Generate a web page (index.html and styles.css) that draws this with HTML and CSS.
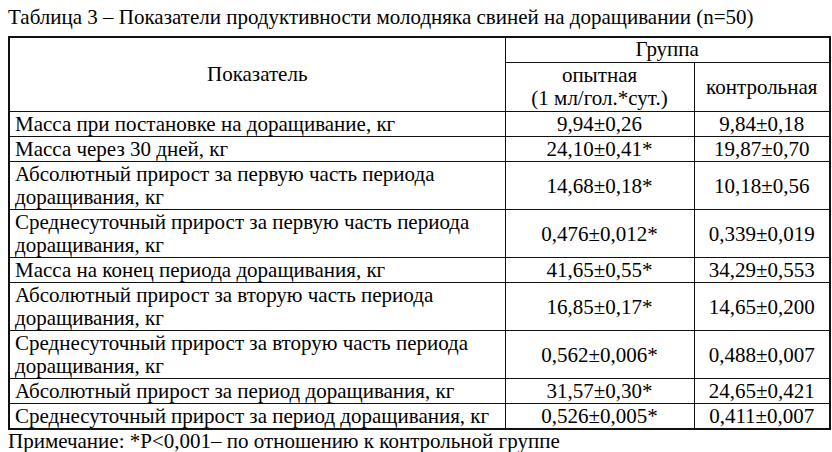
FILE: index.html
```html
<!DOCTYPE html>
<html lang="ru">
<head>
<meta charset="utf-8">
<title>Таблица 3</title>
<link rel="stylesheet" href="styles.css">
</head>
<body>
<div class="page">
  <p class="caption">Таблица 3 – Показатели продуктивности молодняка свиней на доращивании (n=50)</p>
  <table class="data">
    <colgroup>
      <col class="c-name">
      <col class="c-exp">
      <col class="c-ctl">
    </colgroup>
    <thead>
      <tr class="h1">
        <th rowspan="2" class="name-head">Показатель</th>
        <th colspan="2">Группа</th>
      </tr>
      <tr class="h2">
        <th>опытная<br>(1 мл/гол.*сут.)</th>
        <th>контрольная</th>
      </tr>
    </thead>
    <tbody>
      <tr><td class="name">Масса при постановке на доращивание, кг</td><td>9,94±0,26</td><td>9,84±0,18</td></tr>
      <tr><td class="name">Масса через 30 дней, кг</td><td>24,10±0,41*</td><td>19,87±0,70</td></tr>
      <tr class="tall"><td class="name">Абсолютный прирост за первую часть периода доращивания, кг</td><td>14,68±0,18*</td><td>10,18±0,56</td></tr>
      <tr class="tall"><td class="name">Среднесуточный прирост за первую часть периода доращивания, кг</td><td>0,476±0,012*</td><td>0,339±0,019</td></tr>
      <tr><td class="name">Масса на конец периода доращивания, кг</td><td>41,65±0,55*</td><td>34,29±0,553</td></tr>
      <tr class="tall"><td class="name">Абсолютный прирост за вторую часть периода доращивания, кг</td><td>16,85±0,17*</td><td>14,65±0,200</td></tr>
      <tr class="tall"><td class="name">Среднесуточный прирост за вторую часть периода доращивания, кг</td><td>0,562±0,006*</td><td>0,488±0,007</td></tr>
      <tr><td class="name">Абсолютный прирост за период доращивания, кг</td><td>31,57±0,30*</td><td>24,65±0,421</td></tr>
      <tr><td class="name">Среднесуточный прирост за период доращивания, кг</td><td>0,526±0,005*</td><td>0,411±0,007</td></tr>
    </tbody>
  </table>
  <p class="note">Примечание: *P&lt;0,001– по отношению к контрольной группе</p>
</div>
</body>
</html>
```

FILE: styles.css
```css
html, body {
  margin: 0;
  padding: 0;
  background: #ffffff;
}
.page {
  width: 832px;
  height: 452px;
  padding: 6px 0 0 8px;
  box-sizing: border-box;
  font-family: "Liberation Serif", "Times New Roman", serif;
  font-size: 21px;
  line-height: 23px;
  color: #000000;
}
.caption {
  margin: 0 0 7px 0;
}
.data {
  border-collapse: collapse;
  width: 821px;
  table-layout: fixed;
  border: 2px solid #111111;
}
.c-name { width: 496px; }
.c-exp { width: 189px; }
.c-ctl { width: 136px; }
.data th,
.data td {
  border: 1px solid #111111;
  padding: 1px 2px 0 2px;
  font-weight: normal;
  text-align: center;
  vertical-align: middle;
}
.data .h1 th { padding: 0 2px 1px 2px; }
.data .h2 th { padding: 1px 2px 1px 2px; }
.data td.name { text-align: left; padding-left: 5px; }
.note {
  margin: 0;
}
```
